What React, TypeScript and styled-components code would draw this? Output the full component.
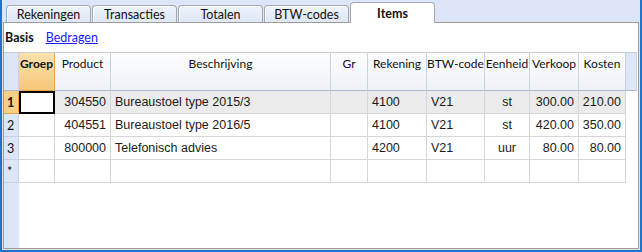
import { Fragment } from "react";
import styled, { createGlobalStyle } from "styled-components";

const GlobalStyle = createGlobalStyle`
  body {
    margin: 0;
    background: #ffffff;
  }
`;

const uiFont = `Lato, "Noto Sans", sans-serif`;
const cellFont = `"Liberation Sans", Arial, sans-serif`;

const Frame = styled.div`
  box-sizing: border-box;
  width: 642px;
  height: 252px;
  border: 2px solid #1c74cc;
  border-top: none;
  background: #dce6f8;
  display: flex;
  flex-direction: column;
`;

const TabStrip = styled.div`
  height: 22px;
  display: flex;
  align-items: flex-end;
  padding-left: 4px;
  gap: 1px;
`;

const Tab = styled.div<{ $active?: boolean }>`
  box-sizing: border-box;
  width: 85px;
  height: ${(p) => (p.$active ? 21 : 17)}px;
  margin-bottom: ${(p) => (p.$active ? -1 : 0)}px;
  border: 1px solid #a3a8b0;
  border-bottom: none;
  border-radius: 4px 4px 0 0;
  background: ${(p) =>
    p.$active ? "#ffffff" : "linear-gradient(#eef3fb, #dfe7f6)"};
  box-shadow: inset 1px 1px 0 #ffffff;
  font-family: ${uiFont};
  font-size: 12.5px;
  font-weight: ${(p) => (p.$active ? 700 : 400)};
  color: #111;
  display: flex;
  align-items: center;
  justify-content: center;
  position: relative;
  z-index: ${(p) => (p.$active ? 2 : 1)};
`;

const Panel = styled.div`
  flex: 1;
  margin: 0 1px 1px 1px;
  border: 1px solid #9c9c9c;
  outline: 1px solid #e2e2e2;
  background: #ffffff;
  display: flex;
  flex-direction: column;
`;

const SubBar = styled.div`
  height: 29px;
  display: flex;
  align-items: center;
  gap: 12px;
  padding-left: 1px;
  font-family: ${uiFont};
  font-size: 12.5px;
`;

const SubActive = styled.span`
  font-weight: 700;
  color: #111;
`;

const SubLink = styled.span`
  color: #1a1aff;
  text-decoration: underline;
`;

const GridArea = styled.div`
  flex: 1;
  background: linear-gradient(to right, #dce6f7 15px, #ffffff 15px);
`;

const Grid = styled.div`
  display: grid;
  grid-template-columns: 15px 36px 56px 220px 37px 59px 58px 45px 49px 47px 11px;
  grid-auto-rows: 23px;
  grid-template-rows: 39px;
`;

const HeadCell = styled.div<{ $active?: boolean; $blank?: boolean }>`
  box-sizing: border-box;
  border-top: 1px solid #c4ccd8;
  border-right: 1px solid ${(p) => (p.$active ? "#eea24a" : "#c9d2de")};
  border-bottom: 1px solid ${(p) => (p.$active ? "#eea24a" : "#a9b8cc")};
  background: ${(p) =>
    p.$blank
      ? "#dce6f7"
      : p.$active
      ? "linear-gradient(#fae1ad, #f5c877)"
      : "linear-gradient(#fdfdfe, #eef2f7)"};
  font-family: ${uiFont};
  font-size: 12px;
  font-weight: ${(p) => (p.$active ? 700 : 400)};
  color: #111;
  text-align: center;
  padding-top: 3px;
  white-space: nowrap;
  overflow: hidden;
`;

const RowHead = styled.div<{ $active?: boolean }>`
  box-sizing: border-box;
  border-bottom: 1px solid ${(p) => (p.$active ? "#eea24a" : "#c5d1e2")};
  border-right: 1px solid ${(p) => (p.$active ? "#eea24a" : "#c5d1e2")};
  background: ${(p) => (p.$active ? "#f8cf86" : "#dce6f7")};
  font-family: ${uiFont};
  font-size: 12.5px;
  font-weight: ${(p) => (p.$active ? 700 : 400)};
  color: #111;
  display: flex;
  align-items: center;
  padding-left: 3px;
`;

const Cell = styled.div<{
  $align?: Align;
  $current?: boolean;
  $selected?: boolean;
}>`
  box-sizing: border-box;
  border-right: 1px solid #d6d6d6;
  border-bottom: 1px solid #d6d6d6;
  background: ${(p) =>
    p.$selected ? "#ffffff" : p.$current ? "#ebebeb" : "#ffffff"};
  outline: ${(p) => (p.$selected ? "2px solid #000" : "none")};
  outline-offset: -2px;
  font-family: ${cellFont};
  font-size: 12.5px;
  color: #1a1a1a;
  display: flex;
  align-items: center;
  justify-content: ${(p) =>
    p.$align === "right"
      ? "flex-end"
      : p.$align === "center"
      ? "center"
      : "flex-start"};
  padding: 0 4px;
  white-space: nowrap;
  overflow: hidden;
`;

const Filler = styled.div``;

type Align = "left" | "right" | "center";

const columns: { title: string; align: Align; active?: boolean }[] = [
  { title: "Groep", align: "left", active: true },
  { title: "Product", align: "right" },
  { title: "Beschrijving", align: "left" },
  { title: "Gr", align: "left" },
  { title: "Rekening", align: "left" },
  { title: "BTW-code", align: "left" },
  { title: "Eenheid", align: "center" },
  { title: "Verkoop", align: "right" },
  { title: "Kosten", align: "right" },
];

const rows: string[][] = [
  ["", "304550", "Bureaustoel type 2015/3", "", "4100", "V21", "st", "300.00", "210.00"],
  ["", "404551", "Bureaustoel type 2016/5", "", "4100", "V21", "st", "420.00", "350.00"],
  ["", "800000", "Telefonisch advies", "", "4200", "V21", "uur", "80.00", "80.00"],
  ["", "", "", "", "", "", "", "", ""],
];

const tabs = ["Rekeningen", "Transacties", "Totalen", "BTW-codes", "Items"];

export default function App() {
  return (
    <>
      <GlobalStyle />
      <Frame>
        <TabStrip>
          {tabs.map((t) => (
            <Tab key={t} $active={t === "Items"}>
              {t}
            </Tab>
          ))}
        </TabStrip>
        <Panel>
          <SubBar>
            <SubActive>Basis</SubActive>
            <SubLink>Bedragen</SubLink>
          </SubBar>
          <GridArea>
            <Grid>
              <HeadCell $blank />
              {columns.map((c) => (
                <HeadCell key={c.title} $active={c.active}>
                  {c.title}
                </HeadCell>
              ))}
              <HeadCell $blank />
              {rows.map((r, i) => (
                <Fragment key={i}>
                  <RowHead $active={i === 0}>{i < 3 ? i + 1 : "*"}</RowHead>
                  {r.map((v, j) => (
                    <Cell
                      key={j}
                      $align={columns[j].align}
                      $current={i === 0}
                      $selected={i === 0 && j === 0}
                    >
                      {v}
                    </Cell>
                  ))}
                  <Filler />
                </Fragment>
              ))}
            </Grid>
          </GridArea>
        </Panel>
      </Frame>
    </>
  );
}
